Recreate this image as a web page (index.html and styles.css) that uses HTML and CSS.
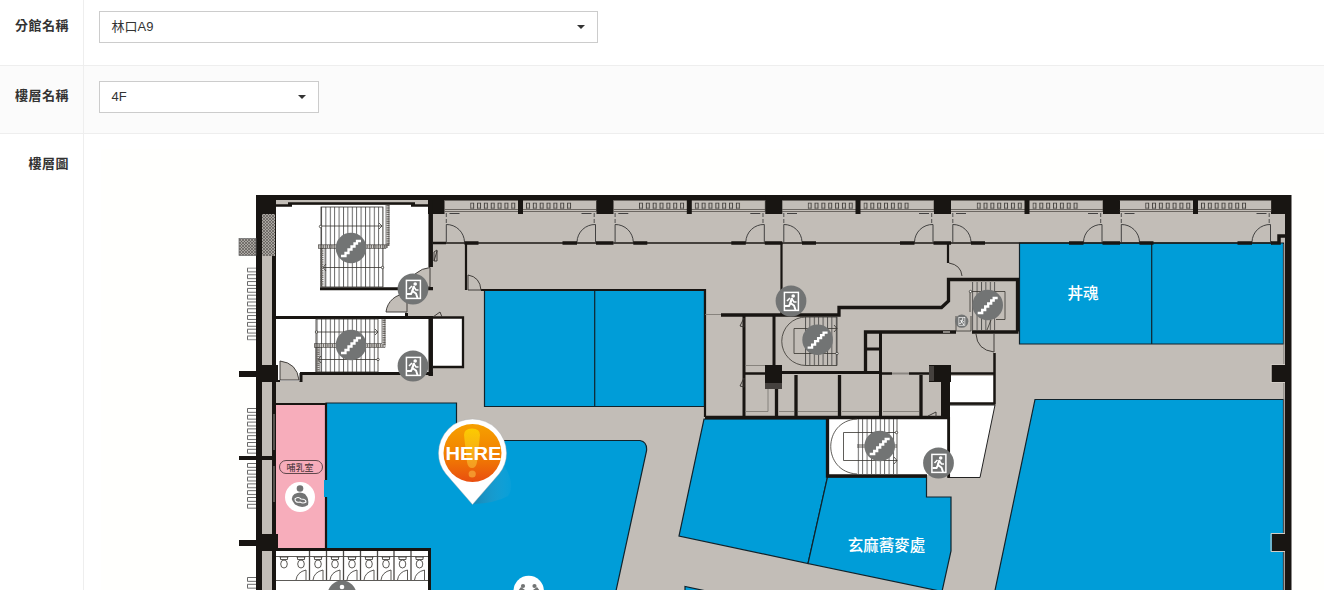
FILE: index.html
```
<!DOCTYPE html>
<html lang="zh-Hant">
<head>
<meta charset="utf-8">
<title>樓層圖</title>
<link rel="stylesheet" href="styles.css">
</head>
<body>
<main class="form">
  <div class="row row-branch">
    <div class="label">分館名稱</div>
    <div class="field"><div class="select select-wide"><span>林口A9</span><i class="caret"></i></div></div>
  </div>
  <div class="row row-floor">
    <div class="label">樓層名稱</div>
    <div class="field"><div class="select select-narrow"><span>4F</span><i class="caret"></i></div></div>
  </div>
  <div class="row row-map">
    <div class="label">樓層圖</div>
    <div class="field">
      <svg class="plan" width="1225" height="441" viewBox="99 149 1225 441">
        <defs>
          <pattern id="hatch" width="3" height="3" patternUnits="userSpaceOnUse"><rect width="3" height="3" fill="#aaa6a1"/><path d="M0 0L3 3M3 0L0 3" stroke="#514e4a" stroke-width=".6"/></pattern>
          <pattern id="treads" width="4.4" height="10" patternUnits="userSpaceOnUse" x="321"><path d="M.5 0V10" stroke="#333" stroke-width=".8"/></pattern>
          <pattern id="fins" width="10" height="6.8" patternUnits="userSpaceOnUse"><path d="M9 .5H.5V4.300H9" fill="none" stroke="#444" stroke-width=".8"/></pattern>
          <pattern id="vents" width="6.85" height="9" patternUnits="userSpaceOnUse"><rect x=".5" y=".5" width="3" height="5.5" fill="none" stroke="#3c3936" stroke-width=".9"/></pattern>
          <linearGradient id="orange" x1="0" y1="0" x2="0" y2="1"><stop offset="0" stop-color="#f6a000"/><stop offset=".5" stop-color="#f28300"/><stop offset="1" stop-color="#e94e0f"/></linearGradient>
          <linearGradient id="mark" x1="0" y1="0" x2="0" y2="1"><stop offset="0" stop-color="#fccb00"/><stop offset="1" stop-color="#f49b25"/></linearGradient>
          <linearGradient id="shade" x1="0" y1="0" x2="1" y2="0"><stop offset="0" stop-color="#28759b" stop-opacity=".6"/><stop offset="1" stop-color="#5ab4d8" stop-opacity=".08"/></linearGradient>
          <g id="stairs"><circle r="15.3" fill="#727474"/><path d="M-10 8H-5.5V5H-2.5V1.5H.5V-1.5H3.5V-4.5H6V-7H10" fill="none" stroke="#fff" stroke-width="2.3"/></g>
          <g id="exit"><circle r="15.4" fill="#727474"/><rect x="-6.6" y="-8.6" width="14" height="18" fill="none" stroke="#fff" stroke-width="1.5"/><circle cx="2.2" cy="-5" r="1.8" fill="#fff"/><path d="M1-3L-1 2M-1-3L-4 0M1-2L3 1H5.5" fill="none" stroke="#fff" stroke-width="1.6"/><path d="M1-3L-.5 2L3 4.5L4.5 9M-.5 2L-2 5H-6" fill="none" stroke="#fff" stroke-width="2"/></g>
          <!-- one window bay of the north facade, 169 units wide -->
          <g id="bay">
            <path d="M0 200.5H152V211.5H0M0 209.5H152" fill="none" stroke="#55514d" stroke-width=".8"/>
            <rect x="73.5" y="200" width="5" height="14" fill="#181512"/>
            <g fill="url(#vents)"><rect width="47" height="6.6" transform="translate(25.700 202.5)"/><rect width="47" height="6.6" transform="translate(81.500 202.5)"/></g>
            <path d="M5 213.5H15M137 213.5H147" stroke="#333" stroke-width=".9"/>
            <path d="M1.8 213V224M149.7 213V224" stroke="#333" stroke-width=".8" stroke-dasharray="4 2"/>
            <path d="M1.8 242V224.5A18 18 0 0 1 20 242M151 242V224.5A18 18 0 0 0 132.5 242" fill="none" stroke="#333" stroke-width=".9"/>
            <path d="M0 243H152" stroke="#1b1815" stroke-width="1.6"/>
            <path d="M20 243H34M118 243H132.500M151.500 243H169" stroke="#181512" stroke-width="3.6"/>
            <rect x="152" y="195" width="17" height="19" fill="#181512"/>
          </g>
          <g id="wc"><path d="M-4.500 557H4.500M-3.500 557V559.500H3.500V557" /><ellipse cy="564" rx="3.300" ry="4"/><path d="M-5 580Q-4 572 5 570V580"/></g>
        </defs>

        <rect x="101" y="149" width="1223" height="441" fill="#fffffd"/>
        <rect x="257" y="195" width="1034" height="400" fill="#c2bdb7"/>

        <!-- white rooms -->
        <g fill="#fff">
          <path d="M276 205H429V288H405V317H276ZM276 319H429V373H300V381H276ZM433 318H463V367H433ZM829 419H948V475H829ZM950 376H994V403H950ZM276 551H429V590H276Z"/>
          <path d="M948 405H995L980 477.500H948Z" stroke="#222" stroke-width="1"/>
        </g>

        <!-- shops -->
        <g fill="#009dd8" stroke="#10232c" stroke-width="1.200">
          <path d="M484.500 290H704.500V406.500H484.500ZM594.700 290V406.500"/>
          <path d="M1019.500 243H1283.500V344H1019.500ZM1151.700 243V344"/>
          <path d="M1035 399.500H1283.500V600H993Z"/>
          <path d="M326 403H456.500V440.500H640Q647.500 442 646.500 451L614 600H430V549H326Z"/>
          <path d="M704 419H827.500V477L808 563.500L679 536Z"/>
          <path d="M827.500 477H926.500V497H951V551L942 591.500L808 563.500Z"/>
          <path d="M685 600V586.500L730 596"/>
        </g>
        <rect x="275.500" y="404" width="50" height="144" fill="#f7adbb"/>
        <path d="M326 480V497" stroke="#009dd8" stroke-width="4"/>

        <!-- outer walls and columns -->
        <g fill="#181512">
          <path d="M256 195H1291.500V200H256ZM256 195H262V590H256ZM272 214H276V590H272ZM1285 195H1291.500V590H1285Z"/>
          <path d="M256 195H276V214H256ZM428 195H444.500V214H428ZM1271 195H1291V214H1271Z"/>
          <path d="M256 365H278V382H256ZM256 534H278V551H256ZM1271.500 365H1291V382H1271.500ZM1272 534H1291V551H1272Z"/>
          <path d="M239 371H257V377H239ZM239 456H276V460H239ZM239 540H257V546H239Z"/>
        </g>
        <path d="M1283.800 244V365M1283.800 382V534M1283.800 551V590" stroke="#77736e" stroke-width=".8"/>
        <path d="M1285 364.500H1271V382.500H1285M1285 533.500H1271V551.500H1285" fill="none" stroke="#d1ccc5"/>
        <rect x="262" y="214" width="13" height="42" fill="url(#hatch)"/>
        <rect x="239" y="238.500" width="17" height="17" fill="url(#hatch)" stroke="#666" stroke-width=".7"/>
        <g fill="url(#fins)">
          <rect width="9" height="73" transform="translate(247 267.500)"/>
          <rect width="9" height="46" transform="translate(247 408)"/>
          <rect width="9" height="46" transform="translate(247 463)"/>
          <rect width="9" height="14" transform="translate(247 577)"/>
        </g>
        <path d="M274 414V450M274 466V502" stroke="#b5b0aa" stroke-width=".8"/>

        <use href="#bay" x="444.500"/><use href="#bay" x="613.300"/><use href="#bay" x="782"/><use href="#bay" x="951"/>
        <svg x="1119.500" y="195" width="152" height="50" viewBox="0 195 152 50"><use href="#bay"/></svg>
        <path d="M1271 243H1279V236H1285" fill="none" stroke="#181512" stroke-width="3.500"/>

        <!-- inner walls -->
        <g fill="none" stroke="#181512" stroke-width="3">
          <path d="M288 203.500H415M276 205.500H292M411 205.500H429" stroke-width="2.500"/>
          <path d="M430.700 200V267M430.700 316V376M430.700 287V290" stroke-width="4.500"/>
          <path d="M320 288.700H433M276 317.500H433M300 373.500H433M301 373V382M405 314.500H408"/>
          <path d="M433 317.500H463V367H433M433 243H446" stroke-width="2.300"/>
          <path d="M276 381H280M466 243V290" stroke-width="2.200"/>
          <path d="M481 290H705V417M781.500 243V316M948 243V263" stroke-width="2.200"/>
          <path d="M1017.500 331.500V279.500H948.500V301L941.500 307.500H839V315H721M865.500 372V332H956M972 332H1018.500" stroke-width="3.300"/>
          <path d="M744 315V417M774 315V372M781 372.500H882M880.500 332V417M866 349H880"/>
          <path d="M744 373.500H765M880 373.500H892M909 373.500H995M994.500 353V404M950 403.500H995.500" stroke-width="2.500"/>
          <path d="M776.500 375V417M796 375V417M839.500 375V417M921 375V417M705 417.500H948M827.500 417V476H927" stroke-width="3.300"/>
          <path d="M948.700 417V478" stroke-width="2.700"/>
          <path d="M945.500 375V419" stroke-width="9"/>
          <path d="M276 404H326M326 403V480M326 497V549" stroke-width="2.200"/>
          <path d="M276 549.500H429.500V590"/>
        </g>
        <g fill="#181512"><rect x="765" y="365" width="17" height="18"/><rect x="929" y="365" width="22" height="17"/></g>
        <path d="M765 383H782V389H765ZM929 366H934V381H929Z" fill="#45413e"/>
        <path d="M892 373.500H909M943 332H950" stroke="#8a8681" stroke-width="2"/>

        <!-- doors -->
        <g fill="#c2bdb7" stroke="#33302d" stroke-width=".9">
          <path d="M386 312A20 20 0 0 1 407 294V312ZM415 274Q422 268 430 267.500V287H415ZM280 380V361Q297 363 299 380Z"/>
          <path d="M468 290V275Q480 277 481 290ZM949 263Q961 265 962 276M976 334Q977 350 994 352V334"/>
          <path d="M434 261V252L437 250V261ZM434 261L437 251M433 317L440 312L442 317M740 326L744 318V327ZM740 386L744 378V387ZM928 416L936 412V417" fill="none"/>
        </g>

        <!-- stair flights -->
        <g fill="none" stroke="#36332f" stroke-width=".8">
          <rect x="321" y="207" width="62" height="80" fill="url(#treads)"/>
          <path d="M321 226H382M379 223L382 226L379 229M323 267.500H383M326 264L323 267.500L326 271"/>
          <path d="M318 246.500H388V205M322 248V287" stroke="#77736e" stroke-width="3" stroke-dasharray="1.500 .7"/>
          <path d="M318 244.700H389V205M318 248.500H386V205M321 248V287M325 248V287" stroke-width=".6"/>
          <rect x="316" y="319" width="62" height="53" fill="url(#treads)"/>
          <path d="M316 332H378M375 329L378 332L375 335M318 359.500H378M321 356L318 359.500L321 363"/>
          <path d="M314 345.500H384V319M318 347V372" stroke="#77736e" stroke-width="3" stroke-dasharray="1.500 .7"/>
          <path d="M314 343.500H382V319M314 347.500H385V319M316 347V372M320 347V372" stroke-width=".6"/>
          <path d="M837 317H806A24 24 0 0 0 806 365.500H837V317M837 328.500H794V353.500H837M834 325L837 328.500L834 332"/>
          <rect x="805" y="317" width="32" height="48" fill="url(#treads)" stroke="none"/>
          <path d="M857 419C822 421 822 472 857 474M897 432.500H843.500V460.500H897M894 457L897 460.500L894 464M897 419V474M857 445H897M857 447H897"/>
          <rect x="857" y="419" width="40" height="55" fill="url(#treads)" stroke="none"/>
          <rect x="971" y="282" width="25" height="48" fill="url(#treads)" stroke="none"/>
          <path d="M970 291.500H1005V319.500H996M970 291V312M987 330L991 320M956 316V331H971V316"/>
          <g fill="#fff"><circle cx="320.500" cy="226.500" r="1.200"/><circle cx="382.500" cy="267.500" r="1.200"/><circle cx="316.500" cy="332" r="1.200"/><circle cx="378" cy="359.500" r="1.200"/><circle cx="837" cy="353.500" r="1.200"/><circle cx="896.500" cy="432.500" r="1.200"/><circle cx="970.500" cy="291.500" r="1.200"/></g>
          <path d="M745 365.500H765M745 411.500H768V389M779 411.500H794M798 411.500H838M842 411.500H879M883 411.500H919M705 314.500H721" stroke="#77736e"/>
        </g>

        <!-- toilets -->
        <g fill="none" stroke="#4a4744" stroke-width=".9">
          <path d="M276 556.500H428M276 580.500H428"/>
          <path d="M309.500 551V580M326.500 551V580M343.500 551V580M360.500 551V580M377.500 551V580M394 551V580M411 551V580" stroke-width="1.300"/>
          <path d="M279.500 557H288.500M280.500 557V559.500H287.500V557"/><ellipse cx="284" cy="564" rx="3.300" ry="4"/>
          <use href="#wc" x="301"/><use href="#wc" x="318"/><use href="#wc" x="335"/><use href="#wc" x="352"/><use href="#wc" x="369"/><use href="#wc" x="386"/><use href="#wc" x="402.500"/><use href="#wc" x="419.500"/>
        </g>
        <circle cx="342" cy="595" r="14.500" fill="#727474"/><circle cx="342" cy="587" r="2.300" fill="#fff"/><path d="M338 592H346" stroke="#fff" stroke-width="3"/>

        <use href="#stairs" x="351" y="248"/><use href="#stairs" x="351" y="345"/><use href="#stairs" x="817.600" y="339.700"/><use href="#stairs" x="879.700" y="446"/><use href="#stairs" x="987.700" y="305"/>
        <use href="#exit" x="413" y="289"/><use href="#exit" x="413" y="366"/><use href="#exit" x="791" y="301"/><use href="#exit" x="938.500" y="463"/>
        <use href="#exit" transform="translate(961.700 321.200) scale(.43)"/>

        <!-- nursery -->
        <rect x="279.500" y="460.500" width="43" height="13" rx="6.500" fill="none" stroke="#4f3c40" stroke-width=".9"/>
        <text class="room-small" x="300" y="470.500">哺乳室</text>
        <circle cx="300" cy="497" r="15" fill="#fff"/><circle cx="300" cy="488.500" r="3.300" fill="#727474"/>
        <path d="M294.500 494Q300 491 305 494Q309.500 499 308 505Q302 509 295 504.500Q289 498 294.500 494Z" fill="#727474"/><path d="M295 499Q298 496 301 499Q306 499 306 502Q303 504 300 502Q295 503 295 499Z" fill="#727474" stroke="#fff" stroke-width="1.100"/>
        <circle cx="528.700" cy="591" r="15.200" fill="#fff"/><g fill="#727474"><circle cx="523" cy="586" r="2.100"/><circle cx="534.500" cy="586" r="2.100"/><path d="M518 591L521 587L525 590ZM533 590L537 587L540 591Z"/></g>

        <text class="room" x="1083" y="299">丼魂</text>
        <text class="room" x="886.500" y="551">玄麻蕎麥處</text>

        <!-- location pin -->
        <path d="M473 504L504 465Q516 485 508 496Q496 503 473 504Z" fill="url(#shade)"/>
        <path d="M472.500 504.500L446 474Q438.500 465 438.500 453A34 34 0 0 1 506.500 453Q506.500 465 499 474Z" fill="#fff" stroke="#aaa" stroke-opacity=".5" stroke-width=".8"/>
        <circle cx="472.500" cy="453" r="29" fill="url(#orange)"/>
        <path d="M464 435Q464 428.500 472 428.500Q480 428.500 480 435L477 462Q476 468 472 468Q468 468 467 462Z" fill="url(#mark)"/><circle cx="472.200" cy="474" r="3.600" fill="#f4962c"/>
        <text class="here" x="445.500" y="459.500" textLength="56" lengthAdjust="spacingAndGlyphs">HERE</text>
      </svg>
    </div>
  </div>
</main>
</body>
</html>
```
FILE: styles.css
```
* { box-sizing: border-box; }
body {
  margin: 0;
  width: 1324px;
  height: 590px;
  overflow: hidden;
  background: #fff;
  color: #333;
  font: 13px/20px "Liberation Sans", "Noto Sans CJK TC", sans-serif;
}
.form { display: grid; grid-template-rows: 66px 68px 456px; }
.row { display: grid; grid-template-columns: 84px 1240px; border-bottom: 1px solid #eee; }
.row-floor { background: #fbfbfb; }
.row-map { border-bottom: 0; }
.label {
  border-right: 1px solid #eee;
  padding: 16px 14px 0 0;
  text-align: right;
  white-space: nowrap;
  font-weight: bold;
  letter-spacing: .5px;
}
.field { padding: 15px 0 0 15px; min-width: 0; }
.row-branch .field { padding-top: 11px; }
.row-floor .label { padding-top: 20px; }
.row-map .label { padding-top: 20px; }
.select {
  display: flex;
  align-items: center;
  justify-content: space-between;
  height: 32px;
  padding: 0 12px 0 11.5px;
  border: 1px solid #ccc;
  background: #fff;
}
.select-wide { width: 499px; }
.select-narrow { width: 220px; }
.caret { border: 4.5px solid transparent; border-width: 4px 4.5px 0; border-top-color: #333; }
.plan { display: block; }
.room { font-size: 15.5px; font-weight: 500; fill: #fff; text-anchor: middle; }
.room-small { font-size: 9px; fill: #3b2c30; text-anchor: middle; }
.here { font-size: 18.5px; font-weight: bold; fill: #fff; }
```
